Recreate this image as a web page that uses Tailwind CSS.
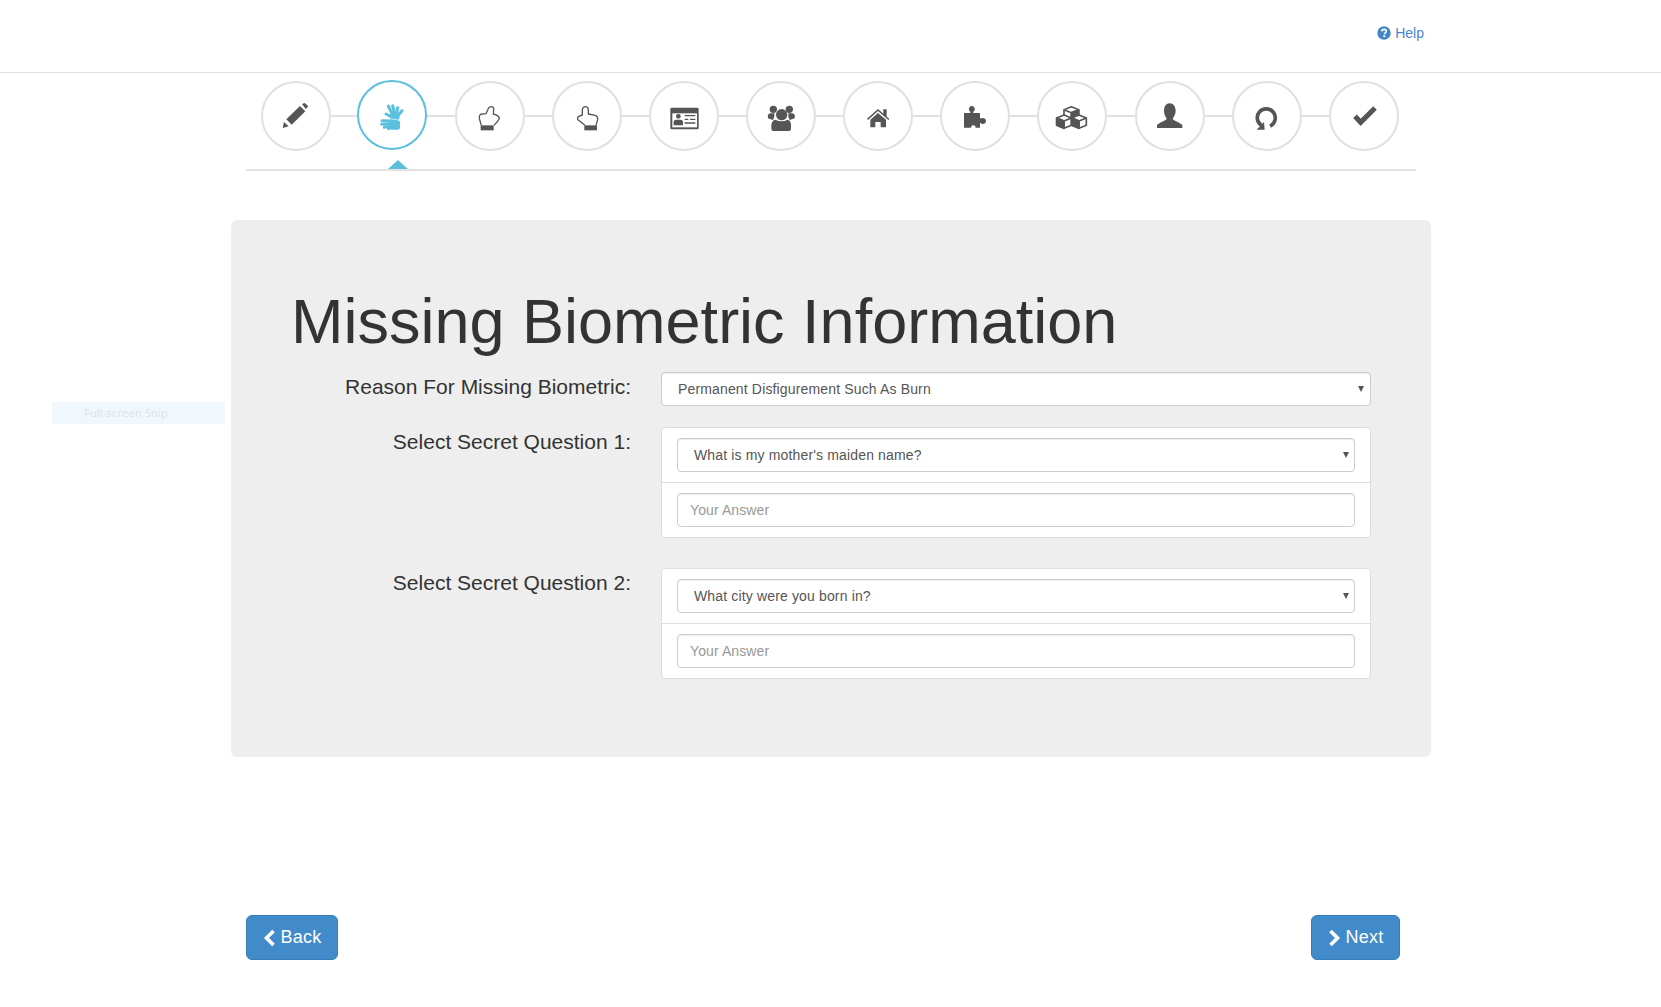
<!DOCTYPE html>
<html lang="en"><head><meta charset="utf-8"><title>Missing Biometric Information</title>
<script src="https://cdn.jsdelivr.net/npm/@tailwindcss/browser@4"></script></head>
<body class="relative bg-white h-[1007px] overflow-hidden font-['Liberation_Sans',Arial,sans-serif] text-[#333]">
<header class="h-[73px] border-b border-[#e2e2e2] flex justify-end items-start pt-[24px] pr-[237px]">
  <a class="flex items-center gap-[4px] text-[14px] leading-[18px] text-[#4a86d0]">
    <svg class="w-[14px] h-[14px]" viewBox="0 0 14 14"><circle cx="7" cy="7" r="6.700" fill="#3f86c9"/><path d="M4.800 5.400C4.900 4 5.900 3.300 7.100 3.300c1.300 0 2.200.8 2.200 1.900 0 1.600-1.900 1.600-1.900 3" fill="none" stroke="#fff" stroke-width="1.700"/><rect x="6.300" y="9.300" width="2" height="1.800" fill="#fff"/></svg>
    Help</a>
</header>

<div class="absolute left-[52px] top-[402px] w-[173px] h-[22px] bg-[#f0f7fd] pl-[32px] text-[11px] tracking-[0.2px] leading-[22px] text-[#e2e2e4] font-['Open_Sans',sans-serif]">Full-screen Snip</div>

<nav class="relative ml-[246px] w-[1170px] h-[98px] border-b-2 border-[#e2e2e2] pt-[7px] pl-[15px]">
  <div class="flex items-end">
    <!-- pencil -->
    <div class="w-[70px] h-[70px] shrink-0 rounded-full border-[2px] border-[#e0e0e0] flex items-center justify-center">
      <svg class="w-[70px] h-[70px] shrink-0" viewBox="-105 -105 210 210" fill="#555"><path d="M-40 36L-36 18-22 31Z"/><path d="M-29 10L12-30 28-14-13 26Z"/><path d="M18-36L26-39 37-29 29-21Z"/></svg>
    </div>
    <div class="w-[26px] h-[2px] mb-[34px] bg-[#e0e0e0] shrink-0"></div>
    <!-- sign language -->
    <div class="w-[70px] h-[70px] mb-[1px] shrink-0 rounded-full border-[2px] border-[#5bc0de] flex items-center justify-center">
      <svg class="w-[70px] h-[70px] shrink-0" viewBox="-105 -105 210 210" fill="none" stroke="#5bc0de" stroke-linecap="round"><g stroke-width="9"><path d="M0-5L-11-27"/><path d="M7-8L2-28"/><path d="M14-6L17-22"/><path d="M20-1L30-13"/><path d="M-4 4L-18-3"/></g><circle cx="8" cy="5" r="15" fill="#5bc0de" stroke="none"/><g stroke-width="9"><path d="M-2 18L-30 17"/><path d="M-3 26L-31 28"/><path d="M-2 32L-23 37"/><path d="M2 36L-11 41"/></g><rect x="-8" y="15" width="32" height="29" rx="8" fill="#5bc0de" stroke="none"/><path d="M-16 9L30 17" stroke="#fff" stroke-width="2"/></svg>
    </div>
    <div class="w-[28px] h-[2px] mb-[34px] bg-[#e0e0e0] shrink-0"></div>
    <!-- hand right -->
    <div class="w-[70px] h-[70px] shrink-0 rounded-full border-[2px] border-[#e0e0e0] flex items-center justify-center">
      <svg class="w-[70px] h-[70px] shrink-0" viewBox="-105 -105 210 210"><path d="M-26 28L-32 8Q-34-6-22-6L-12-7-6-20Q-3-28 4-28 12-28 11-19L10-6Q28-1 28 7 28 12 12 28" fill="#fff" stroke="#555" stroke-width="4" stroke-linejoin="round"/><rect x="-28" y="28" width="39" height="15" fill="#555"/></svg>
    </div>
    <div class="w-[27px] h-[2px] mb-[34px] bg-[#e0e0e0] shrink-0"></div>
    <!-- hand left -->
    <div class="w-[70px] h-[70px] shrink-0 rounded-full border-[2px] border-[#e0e0e0] flex items-center justify-center">
      <svg class="w-[70px] h-[70px] shrink-0" viewBox="-105 -105 210 210"><path d="M-6 28L-25 13Q-32 8-25 1L-14-3-14-19Q-12-28-5-28 3-28 4-19L4-6 25-2Q33 1 32 11L27 28" fill="#fff" stroke="#555" stroke-width="4" stroke-linejoin="round"/><rect x="-8" y="28" width="38" height="15" fill="#555"/></svg>
    </div>
    <div class="w-[27px] h-[2px] mb-[34px] bg-[#e0e0e0] shrink-0"></div>
    <!-- id card -->
    <div class="w-[70px] h-[70px] shrink-0 rounded-full border-[2px] border-[#e0e0e0] flex items-center justify-center">
      <svg class="w-[70px] h-[70px] shrink-0" viewBox="-105 -105 210 210"><rect x="-41" y="-25" width="85" height="65" rx="4" fill="#555"/><rect x="-35" y="-8" width="74" height="42" fill="#fff"/><circle cx="-17" cy="1" r="7" fill="#555"/><path d="M-31 28V19Q-31 11-24 11H-10Q-3 11-3 19V28Z" fill="#555"/><path d="M2-1H34M18 10H34M2 10H13M2 21H34" stroke="#555" stroke-width="4"/></svg>
    </div>
    <div class="w-[27px] h-[2px] mb-[34px] bg-[#e0e0e0] shrink-0"></div>
    <!-- users -->
    <div class="w-[70px] h-[70px] shrink-0 rounded-full border-[2px] border-[#e0e0e0] flex items-center justify-center">
      <svg class="w-[70px] h-[70px] shrink-0" viewBox="-105 -105 210 210" fill="#555"><circle cx="-23" cy="-20" r="11"/><circle cx="25" cy="-20" r="11"/><path d="M-39 7Q-42-8-30-8H-20Q-18 2-24 12ZM41 7Q44-8 32-8H22Q20 2 26 12Z"/><circle cx="2" cy="-4" r="17"/><path d="M-29 38Q-31 12-17 11Q2 21 20 11Q32 12 30 38Q30 45 24 45H-23Q-29 45-29 38Z"/></svg>
    </div>
    <div class="w-[27px] h-[2px] mb-[34px] bg-[#e0e0e0] shrink-0"></div>
    <!-- home -->
    <div class="w-[70px] h-[70px] shrink-0 rounded-full border-[2px] border-[#e0e0e0] flex items-center justify-center">
      <svg class="w-[70px] h-[70px] shrink-0" viewBox="-105 -105 210 210" fill="#555"><path d="M-33 8L0-21 16-7V-20H26V2L34 8 31 12 0-15-30 12Z"/><path d="M-23 11L0-9 24 11V34H8V18H-8V34H-23Z"/></svg>
    </div>
    <div class="w-[27px] h-[2px] mb-[34px] bg-[#e0e0e0] shrink-0"></div>
    <!-- puzzle -->
    <div class="w-[70px] h-[70px] shrink-0 rounded-full border-[2px] border-[#e0e0e0] flex items-center justify-center">
      <svg class="w-[70px] h-[70px] shrink-0" viewBox="-105 -105 210 210"><path d="M-33-9H-14L-14-13A9 9 0 1 1 -5-13L-5-9H15V7L20 7A9 9 0 1 1 20 23L15 20V35H2A7 7 0 1 0 -12 35H-33Z" fill="#555"/></svg>
    </div>
    <div class="w-[27px] h-[2px] mb-[34px] bg-[#e0e0e0] shrink-0"></div>
    <!-- cubes -->
    <div class="w-[70px] h-[70px] shrink-0 rounded-full border-[2px] border-[#e0e0e0] flex items-center justify-center">
      <svg class="w-[70px] h-[70px] shrink-0" viewBox="-105 -105 210 210" fill="#fff" stroke="#555" stroke-width="5" stroke-linejoin="round"><path d="M-2-28L20-19V3L-2 12-24 3V-19Z"/><path d="M-24-19L-2-10 20-19M-2-10V12"/><path d="M-2-10L20-19V3L-2 12Z" fill="#555"/><path d="M-24-3L-2 6V28L-24 37-46 28V6Z"/><path d="M-46 6L-24 15-2 6M-24 15V37"/><path d="M-46 6L-24 15V37L-46 28Z" fill="#555"/><path d="M21-3L43 6V28L21 37-1 28V6Z"/><path d="M-1 6L21 15 43 6M21 15V37"/><path d="M-1 6L21 15V37L-1 28Z" fill="#555"/></svg>
    </div>
    <div class="w-[28px] h-[2px] mb-[34px] bg-[#e0e0e0] shrink-0"></div>
    <!-- user -->
    <div class="w-[70px] h-[70px] shrink-0 rounded-full border-[2px] border-[#e0e0e0] flex items-center justify-center">
      <svg class="w-[70px] h-[70px] shrink-0" viewBox="-105 -105 210 210"><path d="M-1-38C-14-38-18-26-18-15-18-5-14 2-10 8-12 14-34 20-39 27L-39 36H37L37 27C32 20 10 14 8 8 12 2 17-5 17-15 17-26 12-38-1-38Z" fill="#555"/></svg>
    </div>
    <div class="w-[27px] h-[2px] mb-[34px] bg-[#e0e0e0] shrink-0"></div>
    <!-- repeat -->
    <div class="w-[70px] h-[70px] shrink-0 rounded-full border-[2px] border-[#e0e0e0] flex items-center justify-center">
      <svg class="w-[70px] h-[70px] shrink-0" viewBox="-105 -105 210 210"><path d="M9 30A27 27 0 1 0 -17 28" fill="none" stroke="#555" stroke-width="11"/><path d="M-31 41L-7 41-9 18Z" fill="#555"/></svg>
    </div>
    <div class="w-[27px] h-[2px] mb-[34px] bg-[#e0e0e0] shrink-0"></div>
    <!-- check -->
    <div class="w-[70px] h-[70px] shrink-0 rounded-full border-[2px] border-[#e0e0e0] flex items-center justify-center">
      <svg class="w-[70px] h-[70px] shrink-0" viewBox="-105 -105 210 210"><path d="M-27 1L-10 19 33-24" fill="none" stroke="#555" stroke-width="15"/></svg>
    </div>
  </div>
  <div class="absolute left-[142px] bottom-0 w-0 h-0 border-x-[10px] border-x-transparent border-b-[9px] border-b-[#5bc0de]"></div>
</nav>

<main class="ml-[231px] mt-[49px] w-[1200px] h-[537px] bg-[#eee] rounded-[6px] px-[60px] pt-[67px]">
  <h1 class="text-[63px] leading-[69px] font-normal mb-[16px] text-[#333]">Missing Biometric Information</h1>
  <div class="flex flex-col">
    <div class="flex">
      <label class="w-[340px] text-right text-[21px] leading-[30px] shrink-0">Reason For Missing Biometric:</label>
      <div class="relative ml-[30px] w-[710px]">
        <select class="block appearance-none w-full h-[34px] bg-white border border-[#ccc] rounded-[4px] pl-[16px] text-[14px] tracking-[0.15px] text-[#555] shadow-[inset_0_1px_1px_rgba(0,0,0,0.075)]"><option>Permanent Disfigurement Such As Burn</option></select>
        <div class="absolute right-[7px] top-[14px] w-0 h-0 border-x-[3px] border-x-transparent border-t-[6px] border-t-[#555]"></div>
      </div>
    </div>
    <div class="flex mt-[21px]">
      <label class="w-[340px] text-right text-[21px] leading-[30px] shrink-0">Select Secret Question 1:</label>
      <div class="ml-[30px] w-[710px] bg-white border border-[#ddd] rounded-[4px]">
        <div class="relative px-[15px] pt-[10px] pb-[10px] border-b border-[#ddd]">
          <select class="block appearance-none w-full h-[34px] bg-white border border-[#ccc] rounded-[4px] pl-[16px] text-[14px] tracking-[0.15px] text-[#555] shadow-[inset_0_1px_1px_rgba(0,0,0,0.075)]"><option>What is my mother's maiden name?</option></select>
          <div class="absolute right-[21px] top-[24px] w-0 h-0 border-x-[3px] border-x-transparent border-t-[6px] border-t-[#555]"></div>
        </div>
        <div class="px-[15px] pt-[10px] pb-[10px]">
          <input placeholder="Your Answer" class="block w-full h-[34px] bg-white border border-[#ccc] rounded-[4px] px-[12px] text-[14px] tracking-[0.1px] text-[#555] placeholder:text-[#999] shadow-[inset_0_1px_1px_rgba(0,0,0,0.075)]">
        </div>
      </div>
    </div>
    <div class="flex mt-[30px]">
      <label class="w-[340px] text-right text-[21px] leading-[30px] shrink-0">Select Secret Question 2:</label>
      <div class="ml-[30px] w-[710px] bg-white border border-[#ddd] rounded-[4px]">
        <div class="relative px-[15px] pt-[10px] pb-[10px] border-b border-[#ddd]">
          <select class="block appearance-none w-full h-[34px] bg-white border border-[#ccc] rounded-[4px] pl-[16px] text-[14px] tracking-[0.15px] text-[#555] shadow-[inset_0_1px_1px_rgba(0,0,0,0.075)]"><option>What city were you born in?</option></select>
          <div class="absolute right-[21px] top-[24px] w-0 h-0 border-x-[3px] border-x-transparent border-t-[6px] border-t-[#555]"></div>
        </div>
        <div class="px-[15px] pt-[10px] pb-[10px]">
          <input placeholder="Your Answer" class="block w-full h-[34px] bg-white border border-[#ccc] rounded-[4px] px-[12px] text-[14px] tracking-[0.1px] text-[#555] placeholder:text-[#999] shadow-[inset_0_1px_1px_rgba(0,0,0,0.075)]">
        </div>
      </div>
    </div>
  </div>
</main>

<footer class="ml-[246px] w-[1154px] mt-[158px] flex justify-between">
  <button class="w-[92px] h-[45px] bg-[#428bca] border border-[#357ebd] rounded-[6px] text-white text-[18px] tracking-[0.2px] flex items-center justify-center gap-[5px]">
    <svg class="w-[13px] h-[18px]" viewBox="0 0 13 18"><path d="M10.500 2L3.500 9l7 7" fill="none" stroke="#fff" stroke-width="3.600"/></svg>Back</button>
  <button class="w-[89px] h-[45px] bg-[#428bca] border border-[#357ebd] rounded-[6px] text-white text-[18px] tracking-[0.2px] flex items-center justify-center gap-[5px]">
    <svg class="w-[13px] h-[18px]" viewBox="0 0 13 18"><path d="M2.500 2l7 7-7 7" fill="none" stroke="#fff" stroke-width="3.600"/></svg>Next</button>
</footer>
</body></html>
